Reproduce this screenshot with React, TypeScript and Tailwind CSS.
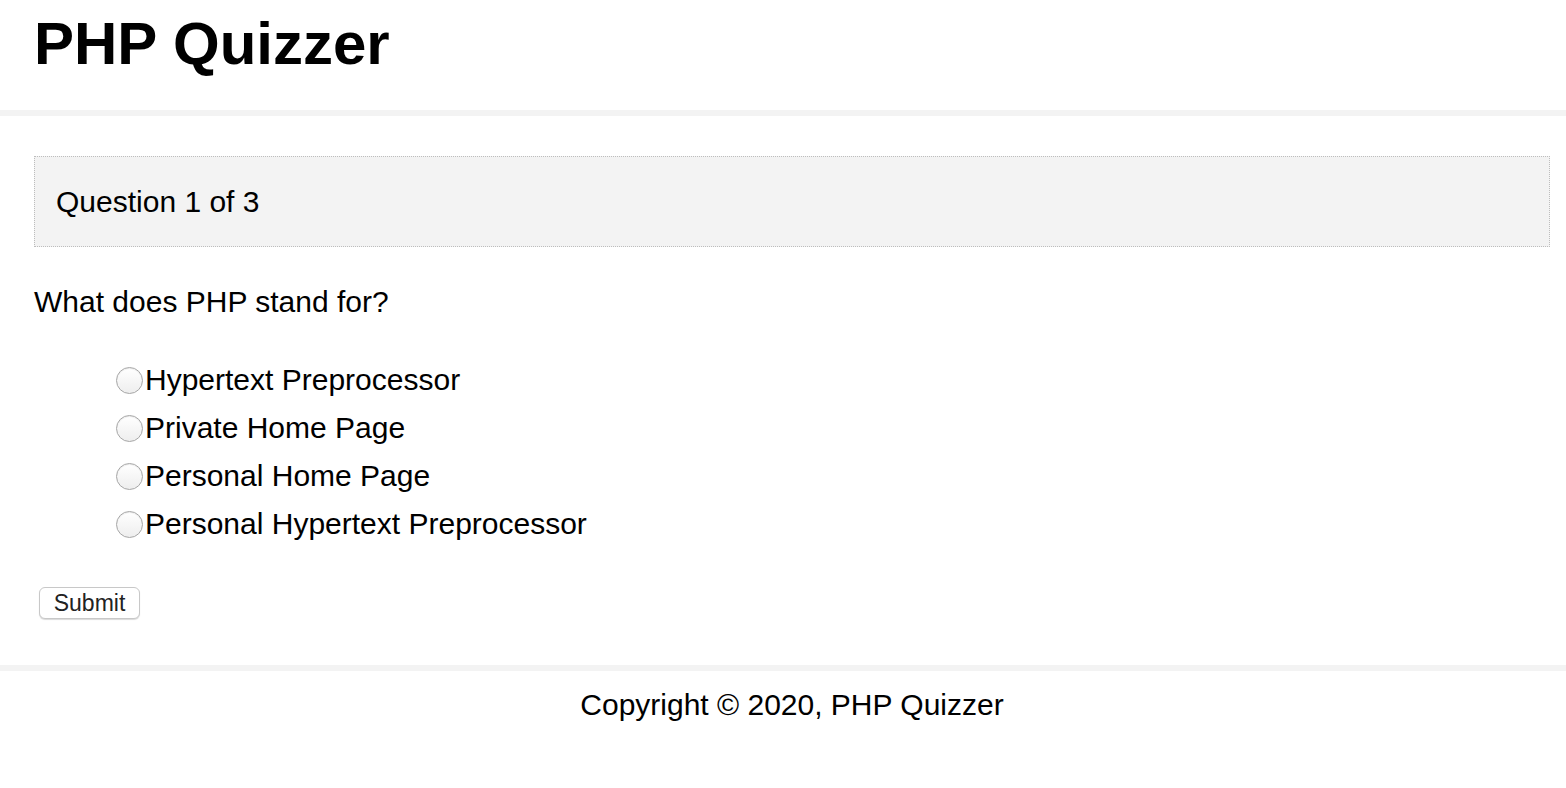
const choices = [
  "Hypertext Preprocessor",
  "Private Home Page",
  "Personal Home Page",
  "Personal Hypertext Preprocessor",
];

export default function App() {
  return (
    <div className="min-h-[788px] bg-white text-black font-['Liberation_Sans',Arial,sans-serif]">
      <header className="border-b-[6px] border-[#f3f3f3] pt-[14px] pb-[36px]">
        <div className="ml-[34px] mr-[16px]">
          <h1 className="text-[60px] leading-[60px] font-bold">PHP Quizzer</h1>
        </div>
      </header>

      <main className="ml-[34px] mr-[16px] pt-[40px]">
        <div className="border border-dotted border-[#bdbdbd] bg-[#f3f3f3] pl-[21px] pt-[30px] pb-[29px]">
          <p className="text-[30px] leading-[30px]">Question 1 of 3</p>
        </div>

        <p className="mt-[40px] text-[30px] leading-[30px]">What does PHP stand for?</p>

        <form className="block">
          <ul className="mt-[39px] pl-[82px]">
            {choices.map((c) => (
              <li key={c} className="flex h-[48px] items-center">
                <label className="flex items-center">
                  <input
                    type="radio"
                    name="choice"
                    value={c}
                    className="appearance-none w-[27px] h-[27px] rounded-full border border-[#a6a6a6] bg-gradient-to-b from-white to-[#eeeeee] shadow-[inset_0_1px_1px_rgba(0,0,0,0.08)]"
                  />
                  <span className="text-[30px] leading-[30px] ml-[2px]">{c}</span>
                </label>
              </li>
            ))}
          </ul>

          <button
            type="button"
            className="mt-[39px] ml-[5px] w-[101px] h-[32px] rounded-[6px] border border-[#c8c8c8] bg-white text-[23px] leading-[30px] text-[#222] shadow-[0_1px_1px_rgba(0,0,0,0.15)]"
          >
            Submit
          </button>
        </form>
      </main>

      <footer className="mt-[46px] border-t-[6px] border-[#f3f3f3] pt-[19px]">
        <div className="ml-[34px] mr-[16px] text-center text-[30px] leading-[30px]">
          Copyright © 2020, PHP Quizzer
        </div>
      </footer>
    </div>
  );
}
